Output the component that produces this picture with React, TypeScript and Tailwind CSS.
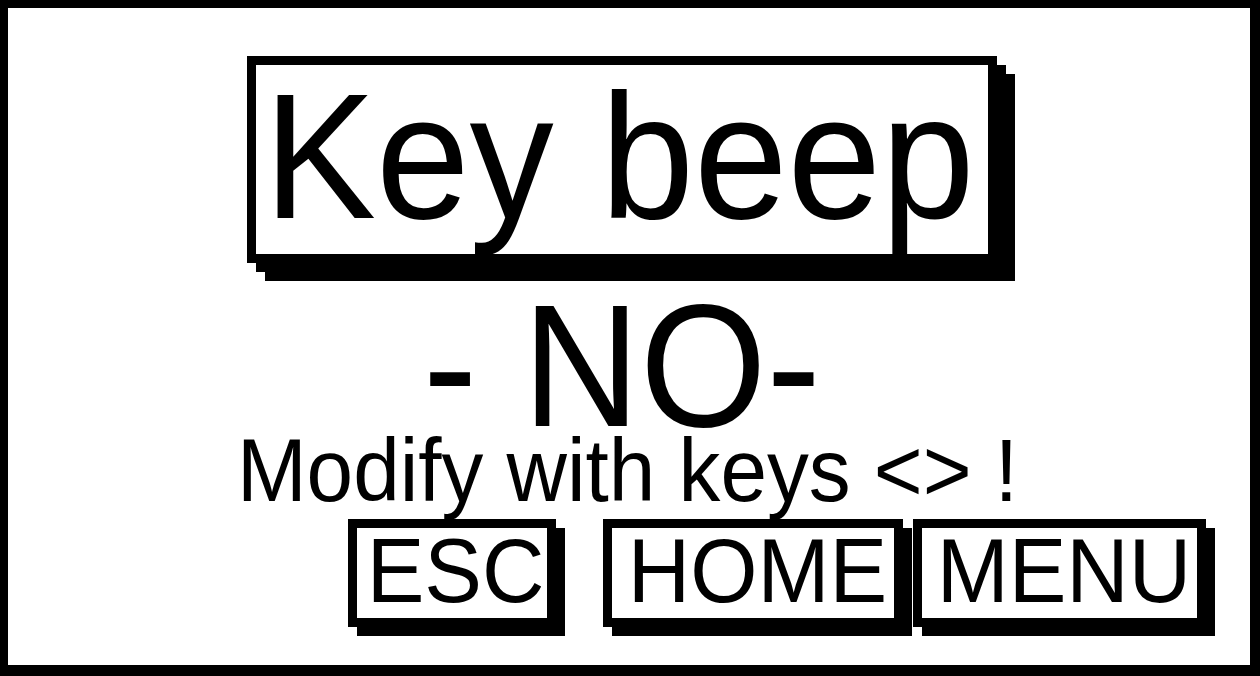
const FONT = "font-['Liberation_Sans',Arial,sans-serif]";

function KeyButton({ label, width }: { label: string; width: string }) {
  return (
    <div
      className={`flex h-[108px] ${width} items-start justify-center border-[9px] border-black bg-white pl-[8px] shadow-[9px_9px_0_0_#000]`}
    >
      <span className={`${FONT} block scale-x-[0.95] text-[91px] leading-[85px] whitespace-nowrap text-black`}>
        {label}
      </span>
    </div>
  );
}

export default function App() {
  return (
    <div className="h-[676px] w-[1260px] bg-black pt-[8px] pr-[10px] pb-[11px] pl-[8px]">
      <div className="flex h-full w-full flex-col bg-white">
        <div className="mt-[48px] ml-[239px] flex w-[750px] flex-col items-center">
          {/* title box */}
          <div className="flex h-[207px] w-full items-start justify-center border-[9px] border-black bg-white pr-[6px] shadow-[9px_9px_0_0_#000,18px_18px_0_0_#000]">
            <span className={`${FONT} mt-[2px] block scale-x-[0.94] text-[179px] leading-none whitespace-nowrap text-black`}>
              Key beep
            </span>
          </div>

          <div className="mt-[33px] flex w-full justify-center">
            <span className={`${FONT} block scale-x-[0.93] text-[175px] leading-[140px] whitespace-pre text-black`}>
              - NO-
            </span>
          </div>

          <div className="mt-[4px] flex w-full justify-center pl-[11px]">
            <span className={`${FONT} block scale-x-[0.94] text-[89px] leading-[60px] whitespace-pre text-black`}>
              Modify with keys {'<>'} !
            </span>
          </div>
        </div>

        <div className="mt-[19px] ml-[340px] flex items-start">
          <KeyButton label="ESC" width="w-[208px]" />
          <div className="ml-[47px]">
            <KeyButton label="HOME" width="w-[300px]" />
          </div>
          <div className="ml-[10px]">
            <KeyButton label="MENU" width="w-[293px]" />
          </div>
        </div>
      </div>
    </div>
  );
}
